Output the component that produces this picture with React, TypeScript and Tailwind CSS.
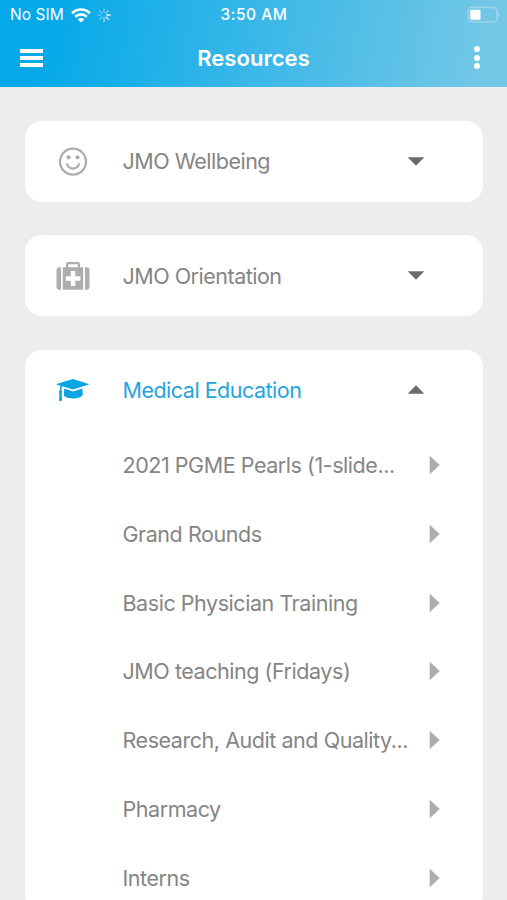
import React, { useState } from "react";

const SmileIcon = () => (
  <svg width="30" height="30" viewBox="0 0 30 30" fill="none">
    <circle cx="15" cy="14.7" r="13" stroke="currentColor" strokeWidth="2.2" />
    <circle cx="10.5" cy="10.3" r="2.1" fill="currentColor" />
    <circle cx="19.5" cy="10.3" r="2.1" fill="currentColor" />
    <path
      d="M9 17.2c1 2.8 3.3 4.4 6 4.4s5-1.6 6-4.4"
      stroke="currentColor"
      strokeWidth="2.1"
      strokeLinecap="round"
    />
  </svg>
);

const MedkitIcon = () => (
  <svg width="34" height="30" viewBox="0 0 34 30" fill="currentColor">
    <path d="M5 6.2v22.6H3.7A3.2 3.2 0 0 1 .5 25.6V9.4a3.2 3.2 0 0 1 3.2-3.2z" />
    <path d="M29 6.2v22.6h1.3a3.2 3.2 0 0 0 3.2-3.2V9.4a3.2 3.2 0 0 0-3.2-3.2z" />
    <path
      fillRule="evenodd"
      d="M6.8 6.2H10v-3C10 2 10.9 1 12.1 1h9.8C23.1 1 24 2 24 3.200v3h3.200v22.600H6.800zM12.200 3.200v3h9.600v-3zM14.800 10v5.200H9.700v4.600h5.100V25h4.500v-5.200h5.100v-4.600h-5.100V10z"
    />
  </svg>
);

const CapIcon = () => (
  <svg width="34" height="26" viewBox="0 0 34 26" fill="currentColor">
    <path d="M16.900 2 33.500 7.300 17 12.600 6.100 9.200l-.7 4.500c.9.600.9 1.600.3 2.300l.4 7.700-3 .3.3-8c-.7-.7-.5-1.700.3-2.300l.6-5L.5 7.500V7z" />
    <path d="M8.300 11.600 17 14.400l9.300-2.900.5 6.300c-1.200 2.300-5.300 3.700-9.800 3.700s-8.600-1.300-9.300-3.400z" />
  </svg>
);

const WifiIcon = () => (
  <svg width="20" height="15" viewBox="0 0 20 15" fill="none" stroke="#fff" strokeWidth="2.6">
    <path d="M1 5.300c5.200-5 12.800-5 18 0" />
    <path d="M4.200 8.700c3.300-3.100 8.300-3.100 11.600 0" />
    <path d="M10 14.600 6.700 11.400c1.900-1.800 4.700-1.800 6.600 0z" fill="#fff" stroke="none" />
  </svg>
);

const spokes = [
  { angle: 0, opacity: 0.4 },
  { angle: 45, opacity: 0.55 },
  { angle: 90, opacity: 0.9 },
  { angle: 135, opacity: 0.9 },
  { angle: 180, opacity: 0.65 },
  { angle: 225, opacity: 0.4 },
  { angle: 270, opacity: 0.3 },
  { angle: 315, opacity: 0.35 },
];

const Spinner = () => (
  <svg width="14" height="14" viewBox="0 0 14 14">
    {spokes.map(({ angle, opacity }) => (
      <path
        key={angle}
        d="M7 .8v3.400"
        stroke="#fff"
        strokeWidth="1.300"
        strokeLinecap="round"
        opacity={opacity}
        transform={`rotate(${angle} 7 7)`}
      />
    ))}
  </svg>
);

const BatteryIcon = () => (
  <svg width="33" height="18" viewBox="0 0 33 18">
    <rect x="1" y="1.500" width="29" height="14.500" rx="4" fill="none" stroke="#fff" strokeOpacity=".3" strokeWidth="1.500" />
    <path d="M31.300 6.200c1.600 1 1.600 4.600 0 5.600z" fill="#fff" opacity=".35" />
    <rect x="3.200" y="3.800" width="10.300" height="10" rx="1" fill="#fff" />
  </svg>
);

const sections = [
  { title: "JMO Wellbeing", icon: <SmileIcon />, items: [] },
  { title: "JMO Orientation", icon: <MedkitIcon />, items: [] },
  {
    title: "Medical Education",
    icon: <CapIcon />,
    items: [
      "2021 PGME Pearls (1-slide...",
      "Grand Rounds",
      "Basic Physician Training",
      "JMO teaching (Fridays)",
      "Research, Audit and Quality...",
      "Pharmacy",
      "Interns",
    ],
  },
];

const App: React.FC = () => {
  const [open, setOpen] = useState("Medical Education");

  return (
    <div className="flex h-screen flex-col overflow-hidden bg-[#ededed] font-['Inter',sans-serif]">
      <header className="h-[87px] shrink-0 bg-[linear-gradient(100deg,#05a9e9_10%,#72c7e6_94%)] text-white">
        {/* Status bar */}
        <div className="grid h-[30px] grid-cols-3 items-center pl-[10px] pr-[7px]">
          <div className="flex items-center">
            <span className="w-[61px] whitespace-nowrap text-[15.5px] tracking-[0.05px]">No SIM</span>
            <WifiIcon />
            <span className="ml-[6px]">
              <Spinner />
            </span>
          </div>
          <span className="-ml-[2px] text-center text-[15.5px] font-medium tracking-[0.5px]">3:50 AM</span>
          <div className="flex justify-end">
            <BatteryIcon />
          </div>
        </div>

        {/* Title bar */}
        <div className="grid h-[55px] grid-cols-[60px_1fr_60px] items-center">
          <button className="ml-[20px] flex w-[23px] flex-col gap-[3px]" aria-label="Menu">
            <span className="h-1 bg-white" />
            <span className="h-1 bg-white" />
            <span className="h-1 bg-white" />
          </button>
          <h1 className="pt-[2px] text-center text-[22px] font-semibold tracking-[0.05px]">Resources</h1>
          <button className="ml-[26.5px] flex w-[6px] flex-col gap-[2.5px]" aria-label="More">
            <span className="size-[6px] rounded-full bg-white" />
            <span className="size-[6px] rounded-full bg-white" />
            <span className="size-[6px] rounded-full bg-white" />
          </button>
        </div>
      </header>

      <main className="flex flex-col gap-[33.4px] pl-[25px] pr-[24.5px] pt-[34px]">
        {sections.map(({ title, icon, items }) => {
          const active = open === title;
          return (
            <section
              key={title}
              className="shrink-0 rounded-[17px] bg-white text-[21.5px] tracking-[-0.45px] text-[#858585]"
            >
              <button
                onClick={() => setOpen(active ? "" : title)}
                className={`flex h-[81px] w-full items-center text-left tracking-[-0.5px] ${active ? "text-[#26a5dc]" : ""}`}
              >
                <span className={`flex w-[97.5px] justify-center pr-px ${active ? "text-[#0aa5e4]" : "text-[#adadad]"}`}>
                  {icon}
                </span>
                <span className="flex-1">{title}</span>
                <svg
                  className={`mr-[58px] text-[#6b6b6b] ${active ? "-mt-[2px] rotate-180" : ""}`}
                  width="18"
                  height="9"
                  viewBox="0 0 18 9"
                  fill="currentColor"
                >
                  <path d="M.7.2h16.600L9 8.800z" />
                </svg>
              </button>
              {active && (
                <ul>
                  {items.map((item) => (
                    <li key={item} className="flex h-[68.75px] items-center pl-[97.5px] pr-[42px]">
                      <span className="flex-1 whitespace-nowrap">{item}</span>
                      <svg width="12" height="20" viewBox="0 0 12 20" fill="#adadad">
                        <path d="M.7.700 10.700 10 .7 19.300z" />
                      </svg>
                    </li>
                  ))}
                </ul>
              )}
            </section>
          );
        })}
      </main>
    </div>
  );
};

export default App;
